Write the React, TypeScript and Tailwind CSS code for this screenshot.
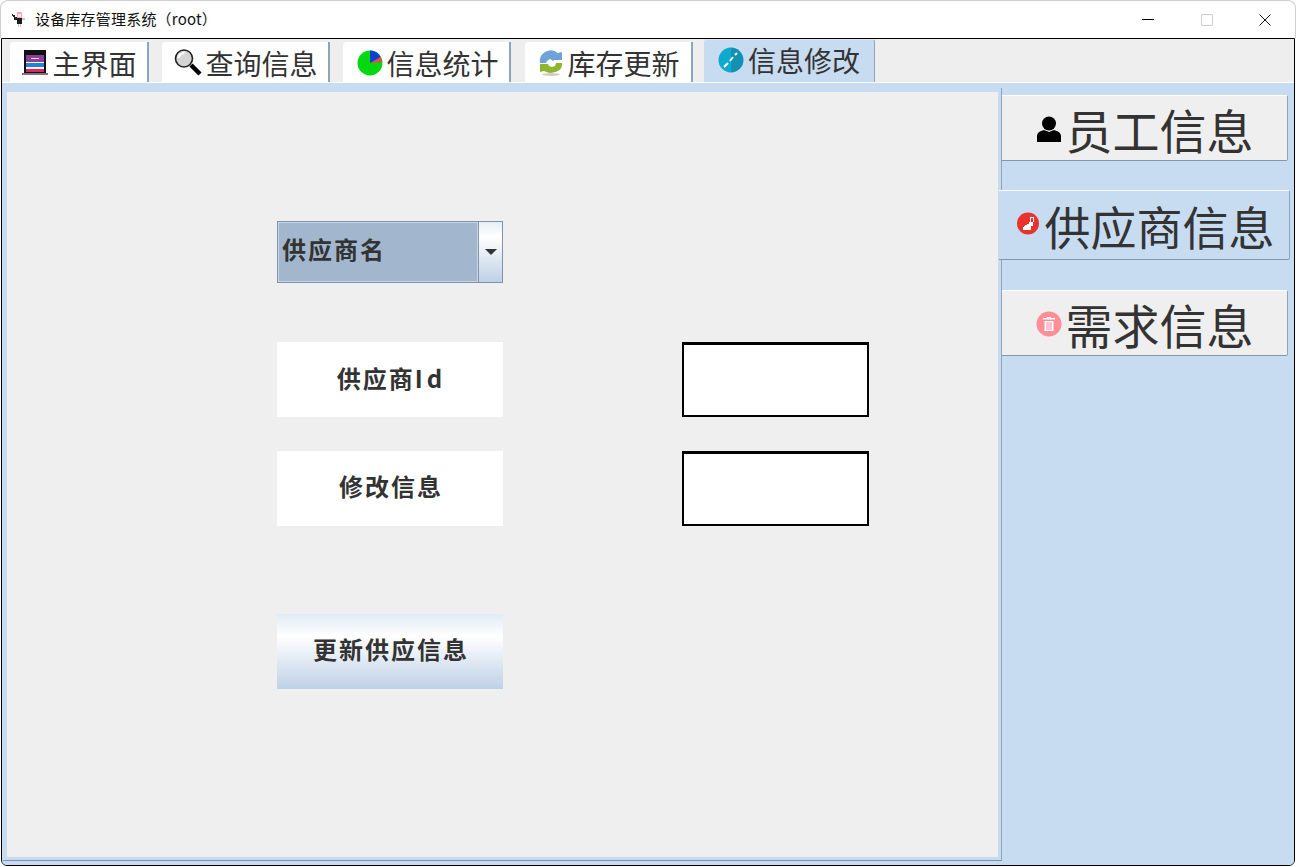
import React from 'react';

const cjk = "font-['Noto_Sans_CJK_SC','Noto_Sans',sans-serif]";

const MonitorIcon = () => (
  <svg width="26" height="26" viewBox="0 0 26 26" shapeRendering="crispEdges">
    <rect x="2" y="0" width="22" height="23" fill="#111" />
    <rect x="4" y="5" width="18" height="17" fill="#f6f6f6" />
    <rect x="4" y="5" width="18" height="7" fill="#8e3f97" />
    <rect x="9" y="8" width="8" height="1" fill="#f3d9f5" />
    <rect x="4" y="13" width="18" height="4" fill="#1b86d6" />
    <rect x="4" y="19" width="18" height="3" fill="#e0245e" />
    <rect x="0" y="23" width="26" height="2" fill="#777" />
  </svg>
);

const SearchIcon = () => (
  <svg width="28" height="28" viewBox="0 0 28 28">
    <circle cx="10" cy="9.5" r="8.5" fill="#d4d4d4" stroke="#222" strokeWidth="1.6" />
    <path d="M4.5 9a6 6 0 0 1 6-5" stroke="#fff" strokeWidth="2.5" fill="none" />
    <path d="M17 16l9 9" stroke="#000" strokeWidth="4.5" />
  </svg>
);

const PieIcon = () => (
  <svg width="26" height="26" viewBox="0 0 26 26">
    <circle cx="13" cy="13" r="12.5" fill="#00d80f" />
    <path d="M13 13V.5A12.5 12.5 0 0 1 22 4.5L24 8Z" fill="#0d3fd0" />
    <path d="M13 13L23.5 7A12.5 12.5 0 0 1 25.4 12Z" fill="#e64b4b" />
  </svg>
);

const RefreshIcon = () => (
  <svg width="24" height="26" viewBox="0 0 24 26">
    <path d="M1 13A11 11 0 0 1 19 3l4-1v8h-8l-1 1-3-2-3 2-1 2Z" fill="#6fa3d8" />
    <path d="M23 13v2A11 8 0 0 1 5 21l-4 1v-8h8l1 2 3 1 3-1 1-3Z" fill="#8fb52e" />
    <ellipse cx="12" cy="24.5" rx="9" ry="1.5" fill="#ccc" />
  </svg>
);

const EditIcon = () => (
  <svg width="26" height="26" viewBox="0 0 26 26">
    <path d="M13 .5A12.5 12.5 0 0 0 13 25.5Z" fill="#0ea9cf" />
    <path d="M13 .5A12.5 12.5 0 0 1 13 25.5Z" fill="#1391b3" />
    <path d="M6 20l4-4M12 14l3-4M17 8l2-2" stroke="#fff" strokeWidth="2" />
  </svg>
);

const UserIcon = () => (
  <svg width="26" height="26" viewBox="0 0 26 26">
    <circle cx="13" cy="7.5" r="7" fill="#000" />
    <path d="M1 26v-6c0-3 3-5 7-6l5 2 5-2c4 1 7 3 7 6v6Z" fill="#000" />
  </svg>
);

const SupplierIcon = () => (
  <svg width="22" height="23" viewBox="0 0 22 23" shapeRendering="crispEdges">
    <circle cx="11" cy="11.5" r="11" fill="#e8332c" shapeRendering="auto" />
    <path d="M6 18v-3l2-2h2v-1h2V10h1V5h4v5h-1v4h-2v4Z" fill="#fff" />
    <rect x="14" y="6" width="2" height="4" fill="#e8332c" />
  </svg>
);

const TrashIcon = () => (
  <svg width="26" height="26" viewBox="0 0 26 26">
    <circle cx="13" cy="13" r="12.5" fill="#ff8e97" />
    <path d="M7 7h12v1.5H7ZM11 6h4v2h-4ZM8.500 10h9v10h-9Z" fill="#fff" />
    <path d="M11 11v8M13 11v8M15 11v8" stroke="#ff8e97" />
  </svg>
);

const TitleIcon = () => (
  <svg width="16" height="18" viewBox="0 0 16 18" shapeRendering="crispEdges">
    <rect x="6" y="1" width="5" height="6" fill="#f4a6c0" />
    <rect x="7" y="3" width="3" height="3" fill="#ffe3e8" />
    <rect x="6" y="7" width="5" height="6" fill="#1c1c1c" />
    <rect x="1" y="3" width="1" height="2" fill="#333" />
    <rect x="2" y="4" width="2" height="2" fill="#222" />
    <rect x="3" y="6" width="3" height="3" fill="#222" />
    <rect x="11" y="7" width="3" height="2" fill="#e9b7c8" />
    <rect x="7" y="13" width="1" height="3" fill="#e9b7c8" />
    <rect x="9" y="13" width="1" height="3" fill="#e9b7c8" />
  </svg>
);

const tabs = [
  { label: '主界面', icon: <MonitorIcon />, w: 'w-[139px]', mr: 'mr-[13px]', gap: 'gap-[4px]', pl: 'pl-[2px]' },
  { label: '查询信息', icon: <SearchIcon />, w: 'w-[168px]', mr: 'mr-[13px]', gap: 'gap-[3px]', pl: 'pl-[2px]' },
  { label: '信息统计', icon: <PieIcon />, w: 'w-[168px]', mr: 'mr-[14px]', gap: 'gap-[3px]', pl: 'pl-[4px]' },
  { label: '库存更新', icon: <RefreshIcon />, w: 'w-[168px]', mr: 'mr-[11px]', gap: 'gap-[4px]', pl: 'pl-[3px]' },
];

const SideButton = ({
  icon,
  label,
  className,
}: {
  icon: React.ReactNode;
  label: string;
  className: string;
}) => (
  <button
    className={`flex items-center justify-center rounded-tr-[2px] rounded-br-[2px] border-t border-t-white border-r border-r-[#8fa3bb] border-b border-b-[#8197b0] text-[#333] ${className}`}
  >
    {icon}
    <span className="leading-none">{label}</span>
  </button>
);

const labelText = 'text-[24px] font-bold tracking-[2px] text-[#333]';

export default function App() {
  return (
    <div className={`w-[1296px] h-[867px] bg-white overflow-hidden flex flex-col ${cjk}`}>
      {/* Title bar */}
      <div className="h-[38px] shrink-0 flex items-center rounded-t-[8px] border-t border-x border-[#cfcfcf] pl-[10px]">
        <TitleIcon />
        <span className="ml-[8px] text-[15px] tracking-[0.2px] text-[#111]">设备库存管理系统（root）</span>
        <div className="ml-auto flex items-center h-full pr-[24px]">
          <div className="w-[12px] h-px bg-black" />
          <div className="ml-[47px] w-[12px] h-[12px] border border-[#cfcfcf] rounded-[1px]" />
          <svg className="ml-[46px]" width="12" height="12" viewBox="0 0 12 12">
            <path d="M.5.5l11 11M11.500.5l-11 11" stroke="#111" strokeWidth="1" />
          </svg>
        </div>
      </div>

      {/* Window content */}
      <div className="flex-1 flex flex-col min-h-0 mx-[1px] mb-[1px] border border-black rounded-b-[6px] overflow-hidden">
        {/* Tabs */}
        <div className="h-[44px] shrink-0 bg-[#eeeeee] flex items-end pl-[8px] border-b border-b-white">
          {tabs.map((t) => (
            <div
              key={t.label}
              className={`${t.w} ${t.mr} ${t.gap} ${t.pl} h-[40px] bg-white rounded-tl-[4px] flex items-center justify-center border-r-2 border-r-[#8ea4bd] text-[28px] text-[#333] pt-[2px]`}
            >
              {t.icon}
              <span className="leading-none">{t.label}</span>
            </div>
          ))}
          <div className="w-[171px] h-[43px] bg-[#c7dbf1] rounded-t-[3px] flex items-center justify-center gap-[4px] border-r border-r-[#8ea4bd] border-t border-t-[#dbe7f5] text-[28px] text-[#333] pb-[3px]">
            <EditIcon />
            <span className="leading-none">信息修改</span>
          </div>
        </div>

        {/* Body */}
        <div className="flex-1 min-h-0 bg-[#c7dbf1] flex pt-[5px] pl-[1px]">
          <div className="w-[999px] h-[773px] shrink-0 pl-[4px] pt-[4px] pr-[3px] pb-[3px] border-r border-r-[#8ea4bd] border-b border-b-[#7f93ab]">
            <div className="h-full bg-[#efefef] flex pl-[270px] pt-[129px]">
              {/* Labels */}
              <div className="w-[226px] flex flex-col">
                <div className="h-[62px] flex border border-[#7f93ab] bg-[#a2b7cd]">
                  <div className={`flex-1 flex items-center pl-[3px] pb-[6px] border border-[#c8d6e5] ${labelText}`}>
                    供应商名
                  </div>
                  <div className="w-[24px] border-l border-l-[#7f93ab] bg-gradient-to-b from-[#e6eef6] via-white via-[25%] to-[#bed1e5] flex items-center justify-center">
                    <div className="w-0 h-0 border-x-[6px] border-x-transparent border-t-[6px] border-t-[#333]" />
                  </div>
                </div>
                <div className={`mt-[59px] h-[75px] pb-[4px] pl-[3px] bg-white flex items-center justify-center ${labelText}`}>
                  <span>
                    供应商<span className="tracking-[4px]">Id</span>
                  </span>
                </div>
                <div className={`mt-[34px] h-[75px] pb-[6px] pl-[2px] bg-white flex items-center justify-center ${labelText}`}>
                  修改信息
                </div>
                <button
                  className={`mt-[88px] h-[75px] pb-[6px] pl-[2px] bg-gradient-to-b from-[#e2ebf5] via-white via-[30%] to-[#bed1e6] flex items-center justify-center ${labelText}`}
                >
                  更新供应信息
                </button>
              </div>

              {/* Inputs */}
              <div className="ml-[179px] w-[187px] flex flex-col pt-[121px]">
                <div className="h-[75px] bg-white border-2 border-black border-t-[3px]" />
                <div className="mt-[34px] h-[75px] bg-white border-2 border-black border-t-[3px]" />
              </div>
            </div>
          </div>

          {/* Side panel */}
          <div className="flex-1 flex flex-col items-start pt-[7px]">
            <SideButton
              icon={<UserIcon />}
              label="员工信息"
              className="w-[286px] h-[66px] bg-[#efefef] text-[47px] gap-[4px] pt-[1px]"
            />
            <SideButton
              icon={
                <span className="ml-[3px] -mt-[3px]">
                  <SupplierIcon />
                </span>
              }
              label="供应商信息"
              className="-ml-[3px] mt-[29px] w-[291px] h-[70px] bg-[#c7dbf1] text-[46px] gap-[6px]"
            />
            <SideButton
              icon={<TrashIcon />}
              label="需求信息"
              className="mt-[30px] w-[286px] h-[66px] bg-[#efefef] text-[47px] gap-[4px] pt-[1px]"
            />
          </div>
        </div>
      </div>
    </div>
  );
}
